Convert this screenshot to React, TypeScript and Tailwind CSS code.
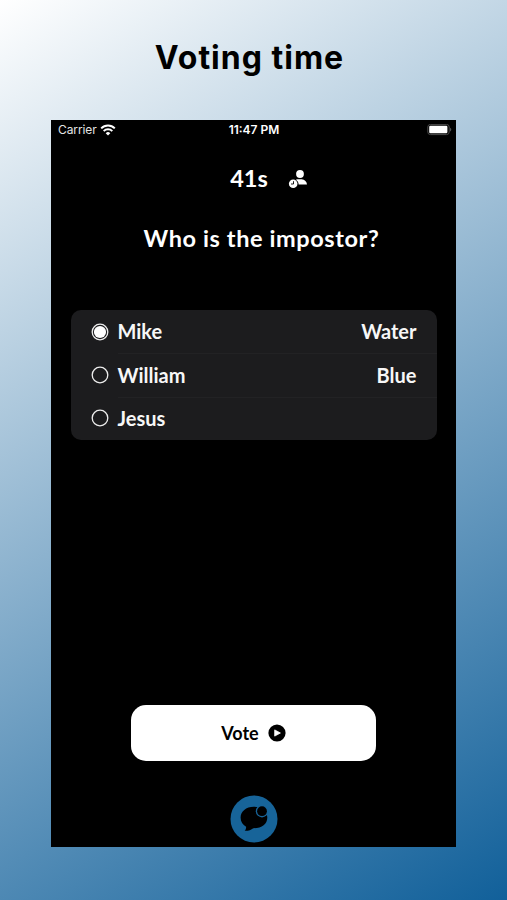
type Player = {
  name: string;
  word?: string;
  selected?: boolean;
};

const players: Player[] = [
  { name: 'Mike', word: 'Water', selected: true },
  { name: 'William', word: 'Blue' },
  { name: 'Jesus' }
];

const WifiIcon = () => (
  <svg viewBox="0 0 16 12" className="h-[12px] w-[16px]" fill="none" stroke="white" strokeWidth="2">
    <path d="M1.2 4.4a9.6 9.6 0 0 1 13.6 0" />
    <path d="M3.7 7.1a6.1 6.1 0 0 1 8.6 0" />
    <path d="M8 11.6 5.7 9.2a3.2 3.2 0 0 1 4.6 0z" fill="white" stroke="none" />
  </svg>
);

const BatteryIcon = () => (
  <svg viewBox="0 0 25 12" className="h-[12px] w-[25px]">
    <rect x="0.8" y="0.4" width="21.4" height="10.2" rx="2.6" fill="none" stroke="#4a4a4a" />
    <rect x="2.2" y="1.8" width="18.2" height="7.4" rx="1.2" fill="white" />
    <path d="M23.2 3.8c1.4.5 1.4 3.1 0 3.6z" fill="#626262" />
  </svg>
);

const PersonClockIcon = () => (
  <svg viewBox="0 0 20 20" className="h-[20px] w-[20px]">
    <circle cx="12" cy="5" r="3.9" fill="white" />
    <path d="M9.4 10.2h4.2c3.2.4 5.2 2.2 5.4 5.3H10.6c0-2-.9-3.7-2.8-4.7.5-.3 1-.5 1.6-.6z" fill="white" />
    <circle cx="5.2" cy="14.7" r="4.3" fill="white" />
    <path d="M5.5 12.2V15H3" fill="none" stroke="black" strokeWidth="0.9" />
  </svg>
);

const PlayIcon = () => (
  <svg viewBox="0 0 18 18" className="h-[18px] w-[18px]">
    <circle cx="9" cy="9" r="8.6" fill="black" />
    <path d="M6.7 5.9v6.2l5.7-3.1z" fill="white" stroke="white" strokeWidth="0.8" strokeLinejoin="round" />
  </svg>
);

const ChatBadge = () => (
  <svg viewBox="0 0 48 48" className="h-[48px] w-[48px]">
    <circle cx="24" cy="24" r="23.5" fill="#176499" />
    <path
      d="M23.8 11.8c-7.8 0-13.2 4.8-13.2 10.8 0 4.2 2.1 7.2 5.5 9.1.1 1.8-.4 3-1.5 4.1 3.4.3 6.3-.9 8.7-2.6 8.3.2 14-4.2 14-10.8 0-6.4-5.7-10.6-13.5-10.6z"
      fill="black"
    />
    <circle cx="32" cy="16.2" r="6.2" fill="#176499" />
    <circle cx="32" cy="16.2" r="4.9" fill="black" />
  </svg>
);

const Radio = ({ selected }: { selected?: boolean }) => (
  <svg viewBox="0 0 18 18" className="h-[18px] w-[18px] shrink-0" fill="none" stroke="#ededed">
    <circle cx="9" cy="9" r="7.8" strokeWidth="1.3" />
    {selected && <circle cx="9" cy="9" r="6.1" fill="white" stroke="none" />}
  </svg>
);

const PlayerRow = ({ player, first }: { player: Player; first: boolean }) => (
  <li className="flex h-[43.4px] items-center pl-5 text-[20px] font-bold text-[#f7f7f7]">
    <Radio selected={player.selected} />
    <div
      className={`ml-[9px] flex h-full flex-1 items-center justify-between border-t pr-5 pb-[2px] ${
        first ? 'border-transparent' : 'border-[#222224]'
      }`}
    >
      <span>{player.name}</span>
      <span>{player.word}</span>
    </div>
  </li>
);

const App = () => (
  <main className="flex h-[900px] w-[507px] flex-col items-center bg-[linear-gradient(149deg,#ffffff_0%,#11609a_100%)] font-['Lato',sans-serif]">
    <h1 className="flex h-[120px] items-center pb-[5px] pr-[8px] text-[32px] font-bold tracking-[1px] text-black font-['Inter',sans-serif]">
      Voting time
    </h1>

    <div className="flex h-[727px] w-[405px] flex-col items-center bg-black text-white">
      <header className="grid h-[20px] w-full grid-cols-3 items-center pl-[7px] pr-[4px] text-[12px] font-['Inter',sans-serif]">
        <div className="flex items-center gap-[3px]">
          <span className="tracking-[-0.1px] text-[#e4e4e4]">Carrier</span>
          <WifiIcon />
        </div>
        <span className="pr-[2px] text-center font-semibold">11:47 PM</span>
        <div className="flex justify-end">
          <BatteryIcon />
        </div>
      </header>

      <div className="mt-[24px] flex h-[30px] items-center gap-5 pl-[31px]">
        <span className="text-[23.5px] font-bold">41s</span>
        <PersonClockIcon />
      </div>

      <h2 className="mt-[28px] flex h-[34px] items-center pl-4 text-[23.5px] font-bold tracking-[0.6px]">
        Who is the impostor?
      </h2>

      <ul className="mt-[54px] h-[130px] w-[366px] rounded-[10px] bg-[#1c1c1e]">
        {players.map((player, index) => (
          <PlayerRow key={player.name} player={player} first={index === 0} />
        ))}
      </ul>

      <button className="mt-[265px] flex h-[56px] w-[245px] items-center justify-center gap-[9px] rounded-[15px] bg-white text-[18px] font-bold text-black">
        <span>Vote</span>
        <PlayIcon />
      </button>

      <div className="mt-[34px]">
        <ChatBadge />
      </div>
    </div>
  </main>
);

export default App;
